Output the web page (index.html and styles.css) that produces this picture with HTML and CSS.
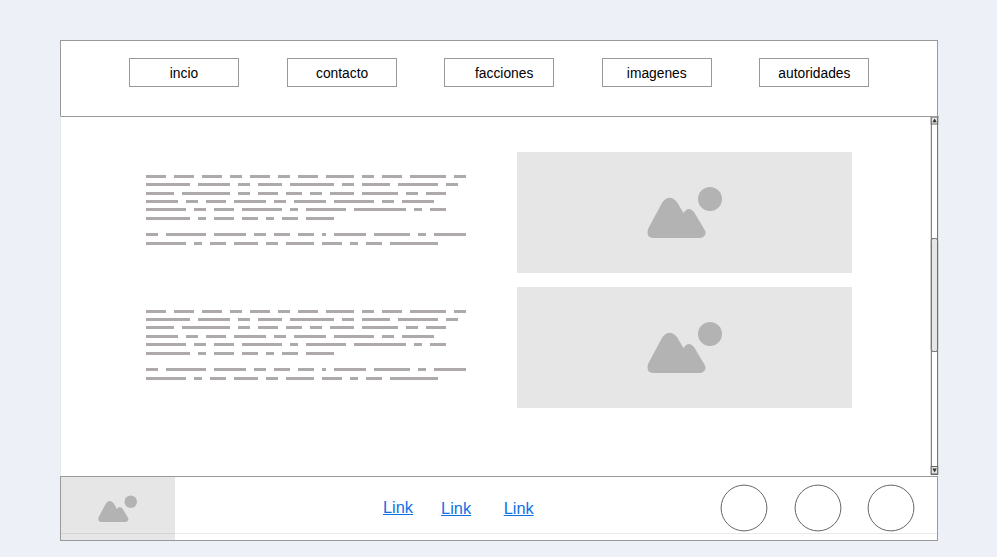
FILE: index.html
```html
<!DOCTYPE html>
<html lang="es">
<head>
<meta charset="utf-8">
<title>Wireframe</title>
<link rel="stylesheet" href="styles.css">
</head>
<body>
<svg width="0" height="0" class="defs">
  <symbol id="picture" viewBox="0 0 75 52">
    <path d="M15.500 15Q22.500 6.500 30 15L36.500 26Q41.500 18.500 47 25L58 43.500Q60 49.500 53.500 51H6Q-1 50.500 1 42Z"/>
    <circle cx="63" cy="12" r="12"/>
  </symbol>
  <symbol id="copy" viewBox="0 0 320 72">
    <path d="M0 2.500H320" stroke-dasharray="20 8 20 8 20 8 12 8 20 8 12 8 20 8 28 8 12 8 20 8 36 8 12 400"/>
    <path d="M0 10.500H320" stroke-dasharray="44 8 32 8 12 8 24 8 44 8 12 8 28 8 40 8 12 400"/>
    <path d="M0 27.500H320" stroke-dasharray="32 8 12 8 20 8 32 8 12 8 32 8 40 8 12 8 32 400"/>
    <path d="M0 35.500H320" stroke-dasharray="40 8 12 8 20 8 40 8 8 8 40 8 52 8 8 8 16 400"/>
    <path d="M0 44.500H320" stroke-dasharray="44 8 8 8 20 8 16 8 8 8 16 8 28 400"/>
    <path d="M0 60.500H320" stroke-dasharray="12 8 40 8 32 8 12 8 16 8 16 8 4 8 32 8 36 8 8 8 32 400"/>
    <path d="M0 69.500H320" stroke-dasharray="40 8 8 8 16 8 24 8 12 8 28 8 20 8 8 8 16 8 48 400"/>
  </symbol>
</svg>
<div class="window">
  <header class="header">
    <nav class="nav">
      <a>incio</a>
      <a class="contact">contacto</a>
      <a class="factions">facciones</a>
      <a>imagenes</a>
      <a>autoridades</a>
    </nav>
  </header>
  <main class="main">
    <div class="rows">
      <section class="row">
        <svg class="copy"><use href="#copy"/><path d="M0 19.500H320" stroke-dasharray="28 8 48 8 12 8 20 8 16 8 12 8 24 8 36 8 12 8 20 400"/></svg>
        <div class="image"><svg class="picture"><use href="#picture"/></svg></div>
      </section>
      <section class="row">
        <svg class="copy"><use href="#copy"/><path d="M0 18.500H320" stroke-dasharray="28 8 48 8 12 8 20 8 16 8 12 8 24 8 36 8 12 8 20 400"/></svg>
        <div class="image"><svg class="picture"><use href="#picture"/></svg></div>
      </section>
    </div>
    <svg class="scrollbar" viewBox="0 0 9 359">
      <rect class="track" x="1.300" y=".5" width="6.300" height="357"/>
      <rect class="button" x="1.200" y="0" width="6.500" height="7"/>
      <path class="arrow" d="M2.400 5.200L4.600 1.500L6.800 5.200Z"/>
      <rect class="thumb" x="1.300" y="121.500" width="6.300" height="113" rx="2"/>
      <rect class="button" x="1.200" y="349.500" width="6.500" height="7.500"/>
      <path class="arrow" d="M2.400 351.500L4.600 355.500L6.800 351.500Z"/>
    </svg>
  </main>
  <footer class="footer">
    <div class="logo"><svg><use href="#picture"/></svg></div>
    <nav class="links"><a>Link</a><a>Link</a><a>Link</a></nav>
    <div class="social">
      <svg viewBox="0 0 48 48"><circle cx="24" cy="24" r="22.900"/></svg>
      <svg viewBox="0 0 48 48"><circle cx="24" cy="24" r="22.900"/></svg>
      <svg viewBox="0 0 48 48"><circle cx="24" cy="24" r="22.900"/></svg>
    </div>
  </footer>
</div>
</body>
</html>
```
FILE: styles.css
```css
* { box-sizing: border-box; }
body {
  margin: 0;
  height: 557px;
  overflow: hidden;
  background: #edf0f6;
  font-family: "Liberation Sans", Arial, sans-serif;
  color: #000;
}
.defs { display: block; }
.window {
  width: 879px;
  height: 501px;
  margin: 40px 0 0 60px;
  background: linear-gradient(#fff, #fff) 0 0 / 878px 100% no-repeat;
}
.header {
  width: 878px;
  height: 76px;
  border: 1px solid #999;
  border-bottom: 0;
  padding: 17px 0 0 68px;
}
.nav { display: flex; gap: 47.600px; }
.nav a {
  flex: none;
  width: 110px;
  height: 29px;
  border: 1px solid #999;
  font-size: 13.800px;
  line-height: 30px;
  text-align: center;
}
.nav .contact { padding-left: 1px; }
.nav .factions { padding-left: 10px; }
.main {
  height: 360px;
  display: flex;
  justify-content: space-between;
  border-top: 1px solid #999;
  border-left: 1px solid #e6e9ee;
}
.rows { display: grid; gap: 15px; padding: 35px 0 0 85px; align-content: start; }
.row { display: flex; gap: 51px; height: 120px; }
.copy {
  width: 320px;
  height: 72px;
  margin-top: 22px;
  fill: none;
  stroke: #aeaaaa;
  stroke-width: 3;
}
.image {
  width: 335px;
  height: 121px;
  padding: 35px 0 0 130px;
  background: #e6e6e6;
}
.picture { display: block; width: 75px; height: 52px; fill: #b3b3b3; }
.scrollbar { flex: none; width: 9px; height: 359px; }
.track { fill: #fff; stroke: #666; }
.thumb { fill: #e6e6e6; stroke: #666; }
.button { fill: #e6e6e6; stroke: #666; }
.arrow { fill: #333; }
.footer {
  width: 878px;
  height: 65px;
  display: flex;
  border: 1px solid #999;
  background: linear-gradient(#e9e9e9, #e9e9e9) 0 56px / 100% 1px no-repeat;
}
.logo {
  width: 114px;
  height: 63px;
  padding: 17.500px 0 0 37px;
  background: linear-gradient(#d4d4d4, #d4d4d4) 0 56px / 100% 1px no-repeat #e6e6e6;
}
.logo svg { display: block; width: 39px; height: 28px; fill: #b3b3b3; }
.links { display: flex; width: 338px; margin-left: 208px; padding-top: 21px; }
.links a {
  color: #1071e5;
  font-size: 16.400px;
  line-height: 18px;
  text-decoration: underline;
}
.links a:nth-child(n+2) { margin-top: 1px; }
.links a:nth-child(2) { margin-left: 28px; }
.links a:nth-child(3) { margin-left: 32.500px; }
.social { display: flex; gap: 25.600px; margin-left: -1px; padding-top: 7px; }
.social svg { flex: none; width: 48px; height: 48px; fill: #fff; stroke: #666; stroke-width: 1; }
```
